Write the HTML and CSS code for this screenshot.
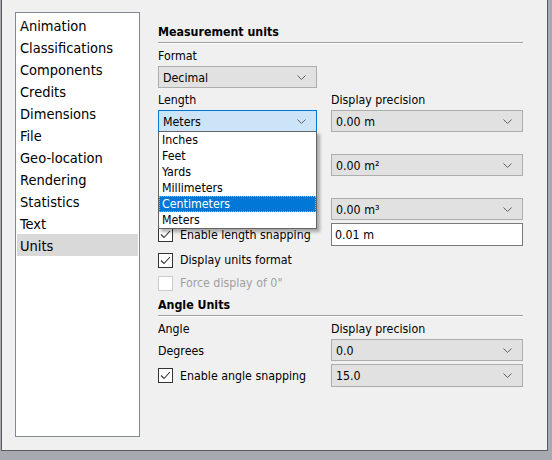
FILE: index.html
```html
<!DOCTYPE html>
<html lang="en">
<head>
    <meta charset="UTF-8">
    <title>Preferences - Units</title>
    <link rel="stylesheet" href="styles.css">
</head>
<body>
    <div class="window">
        <ul class="nav">
            <li>Animation</li>
            <li>Classifications</li>
            <li>Components</li>
            <li>Credits</li>
            <li>Dimensions</li>
            <li>File</li>
            <li>Geo-location</li>
            <li>Rendering</li>
            <li>Statistics</li>
            <li>Text</li>
            <li class="selected">Units</li>
        </ul>

        <div class="panel">
            <div class="section">Measurement units</div>
            <div class="label">Format</div>
            <div class="combo half"><span>Decimal</span><svg class="chev" viewBox="0 0 9 5"><path d="M0.5 0.5 L4.5 4.5 L8.5 0.5"/></svg></div>

            <div class="grid">
                <div class="label">Length</div>
                <div class="label">Display precision</div>

                <div class="combo open-wrap">
                    <div class="combo focused"><span>Meters</span><svg class="chev" viewBox="0 0 9 5"><path d="M0.5 0.5 L4.5 4.5 L8.5 0.5"/></svg></div>
                    <ul class="popup">
                        <li>Inches</li>
                        <li>Feet</li>
                        <li>Yards</li>
                        <li>Millimeters</li>
                        <li class="hot">Centimeters</li>
                        <li>Meters</li>
                    </ul>
                </div>
                <div class="combo"><span>0.00 m</span><svg class="chev" viewBox="0 0 9 5"><path d="M0.5 0.5 L4.5 4.5 L8.5 0.5"/></svg></div>

                <!-- area row: left side sits under the open list -->
                <div class="label"></div>
                <div class="label"></div>
                <div class="combo hidden"></div>
                <div class="combo"><span>0.00 m²</span><svg class="chev" viewBox="0 0 9 5"><path d="M0.5 0.5 L4.5 4.5 L8.5 0.5"/></svg></div>

                <!-- volume row -->
                <div class="label"></div>
                <div class="label"></div>
                <div class="combo hidden"></div>
                <div class="combo"><span>0.00 m³</span><svg class="chev" viewBox="0 0 9 5"><path d="M0.5 0.5 L4.5 4.5 L8.5 0.5"/></svg></div>

                <label class="check snap-row"><span class="box"><svg viewBox="0 0 13 13"><path d="M2 6.5 L5 9.5 L11 3"/></svg></span>Enable length snapping</label>
                <div class="textbox snap-row">0.01 m</div>
            </div>

            <label class="check row first"><span class="box"><svg viewBox="0 0 13 13"><path d="M2 6.5 L5 9.5 L11 3"/></svg></span>Display units format</label>
            <label class="check row disabled"><span class="box"></span>Force display of 0"</label>

            <div class="section angle">Angle Units</div>
            <div class="grid">
                <div class="label">Angle</div>
                <div class="label">Display precision</div>
                <div class="label">Degrees</div>
                <div class="combo"><span>0.0</span><svg class="chev" viewBox="0 0 9 5"><path d="M0.5 0.5 L4.5 4.5 L8.5 0.5"/></svg></div>
                <label class="check snap-row"><span class="box"><svg viewBox="0 0 13 13"><path d="M2 6.5 L5 9.5 L11 3"/></svg></span>Enable angle snapping</label>
                <div class="combo snap-row"><span>15.0</span><svg class="chev" viewBox="0 0 9 5"><path d="M0.5 0.5 L4.5 4.5 L8.5 0.5"/></svg></div>
            </div>
        </div>
    </div>
</body>
</html>
```

FILE: styles.css
```css
body {
    margin: 0;
    background: #a8a8b0;
    font-family: "DejaVu Sans Condensed", "DejaVu Sans", sans-serif;
    font-stretch: condensed;
    font-size: 12.3px;
    color: #000;
}
.window {
    box-sizing: border-box;
    display: flex;
    width: 547px;
    height: 451px;
    margin-left: 1px;
    background: #f0f0f0;
    border-left: 1px solid #5a5a5a;
    border-right: 1px solid #5a5a5a;
    border-bottom: 1px solid #5a5a5a;
}
.nav {
    box-sizing: border-box;
    list-style: none;
    margin: 12px 0 0 13px;
    padding: 1px;
    width: 125px;
    height: 425px;
    background: white;
    border: 1px solid #828790;
    font-size: 14.5px;
}
.nav li {
    height: 22px;
    line-height: 24px;
    padding-left: 3px;
}
.nav li.selected {
    background: #d9d9d9;
}
.panel {
    position: relative;
    margin-left: 18px;
    padding-top: 21px;
    width: 365px;
}
.section {
    height: 21px;
    line-height: 22px;
    font-weight: bold;
    border-bottom: 1px solid #a0a0a0;
    box-shadow: 0 1px 0 #fff;
    margin-bottom: 1px;
}
.label {
    height: 22px;
    line-height: 24px;
}
.grid {
    display: grid;
    grid-template-columns: 159px 192px;
    column-gap: 14px;
}
.combo {
    box-sizing: border-box;
    position: relative;
    display: flex;
    align-items: center;
    justify-content: space-between;
    height: 22px;
    padding: 0 10px 0 4px;
    background: #e1e1e1;
    border: 1px solid #adadad;
}
.combo span {
    padding-top: 1px;
}
.combo.half {
    width: 159px;
}
.combo.focused {
    background: #cce4f7;
    border-color: #0078d7;
}
.chev {
    width: 9px;
    height: 5px;
    fill: none;
    stroke: #606060;
    stroke-width: 1;
}
.open-wrap {
    padding: 0;
    border: none;
    background: none;
    display: block;
}
.open-wrap .combo {
    width: 100%;
}
.popup {
    position: absolute;
    top: 21px;
    left: 0;
    z-index: 5;
    box-sizing: border-box;
    width: 159px;
    margin: 0;
    padding: 0;
    list-style: none;
    background: white;
    border: 1px solid #646464;
    box-shadow: 3px 3px 3px rgba(0, 0, 0, 0.3);
}
.popup li {
    box-sizing: border-box;
    height: 16px;
    line-height: 17px;
    padding-left: 3px;
}
.popup li.hot {
    background: #0078d7;
    color: white;
    outline: 1px dotted #f0a050;
    outline-offset: -1px;
}
.check {
    display: flex;
    align-items: center;
    gap: 7px;
}
.box {
    box-sizing: border-box;
    width: 15px;
    height: 15px;
    background: white;
    border: 1px solid #333;
}
.box svg {
    display: block;
    width: 13px;
    height: 13px;
    fill: none;
    stroke: #333;
    stroke-width: 1.1;
}
.check.disabled {
    color: #a0a0a0;
}
.check.disabled .box {
    border-color: #cccccc;
}
.snap-row {
    margin-top: 3px;
    height: 23px;
}
.textbox {
    box-sizing: border-box;
    line-height: 22px;
    padding-left: 3px;
    background: white;
    border: 1px solid #7a7a7a;
}
.row {
    height: 22px;
    margin-top: 1px;
}
.row.first {
    margin-top: 3px;
}
```
